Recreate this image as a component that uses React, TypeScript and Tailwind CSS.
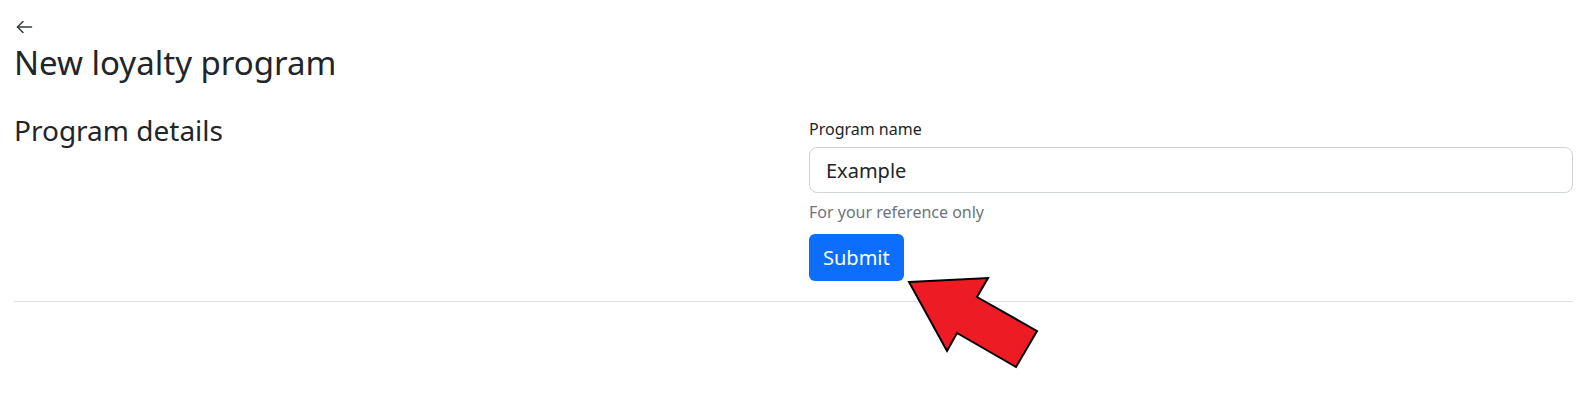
import React from 'react';

const BackArrow = () => (
  <svg
    width="18"
    height="16"
    viewBox="0 0 18 16"
    fill="none"
    stroke="currentColor"
    strokeWidth="1.5"
    strokeLinecap="round"
    strokeLinejoin="round"
    className="block"
  >
    <path d="M16.5 8H2.5" />
    <path d="M8 2.5L2.5 8L8 13.5" />
  </svg>
);

const App = () => {
  return (
    <div className="relative min-h-[401px] bg-white font-['Noto_Sans',sans-serif] text-[#212529] pl-[14px] pr-[8px] pt-[19px]">
      {/* Back link */}
      <a href="#" className="block w-fit pl-[1px] text-[#343a40]">
        <BackArrow />
      </a>

      <h2 className="mt-[9px] text-[33px] leading-[38px] font-normal">New loyalty program</h2>

      {/* Section row */}
      <div className="mt-[31px] flex items-start">
        <div className="flex-1">
          <h3 className="text-[28px] leading-[34px] font-normal">Program details</h3>
        </div>
        <div className="w-[764px] pt-[4px]">
          <label className="block text-[16px] leading-[24px] mb-[6px]">Program name</label>
          <input
            type="text"
            defaultValue="Example"
            className="block w-full h-[46px] rounded-[8px] border border-[#ced4da] px-[16px] text-[20px] text-[#212529] outline-none"
          />
          <div className="mt-[7px] text-[16px] leading-[24px] text-[#6c757d]">For your reference only</div>
          <button className="mt-[10px] h-[47px] rounded-[6px] bg-[#0d6efd] px-[14px] text-[20px] text-white">
            Submit
          </button>
        </div>
      </div>

      <hr className="mt-[20px] border-0 border-t border-[#dee2e6]" />

      {/* Annotation arrow */}
      <svg
        className="absolute left-[900px] top-[270px]"
        width="145"
        height="105"
        viewBox="0 0 145 105"
      >
        <polygon
          points="9,12 88,8 77,27 137,61 116,97 57,63 47,81"
          fill="#ed1c24"
          stroke="#000"
          strokeWidth="2"
          strokeLinejoin="miter"
        />
      </svg>
    </div>
  );
};

export default App;
